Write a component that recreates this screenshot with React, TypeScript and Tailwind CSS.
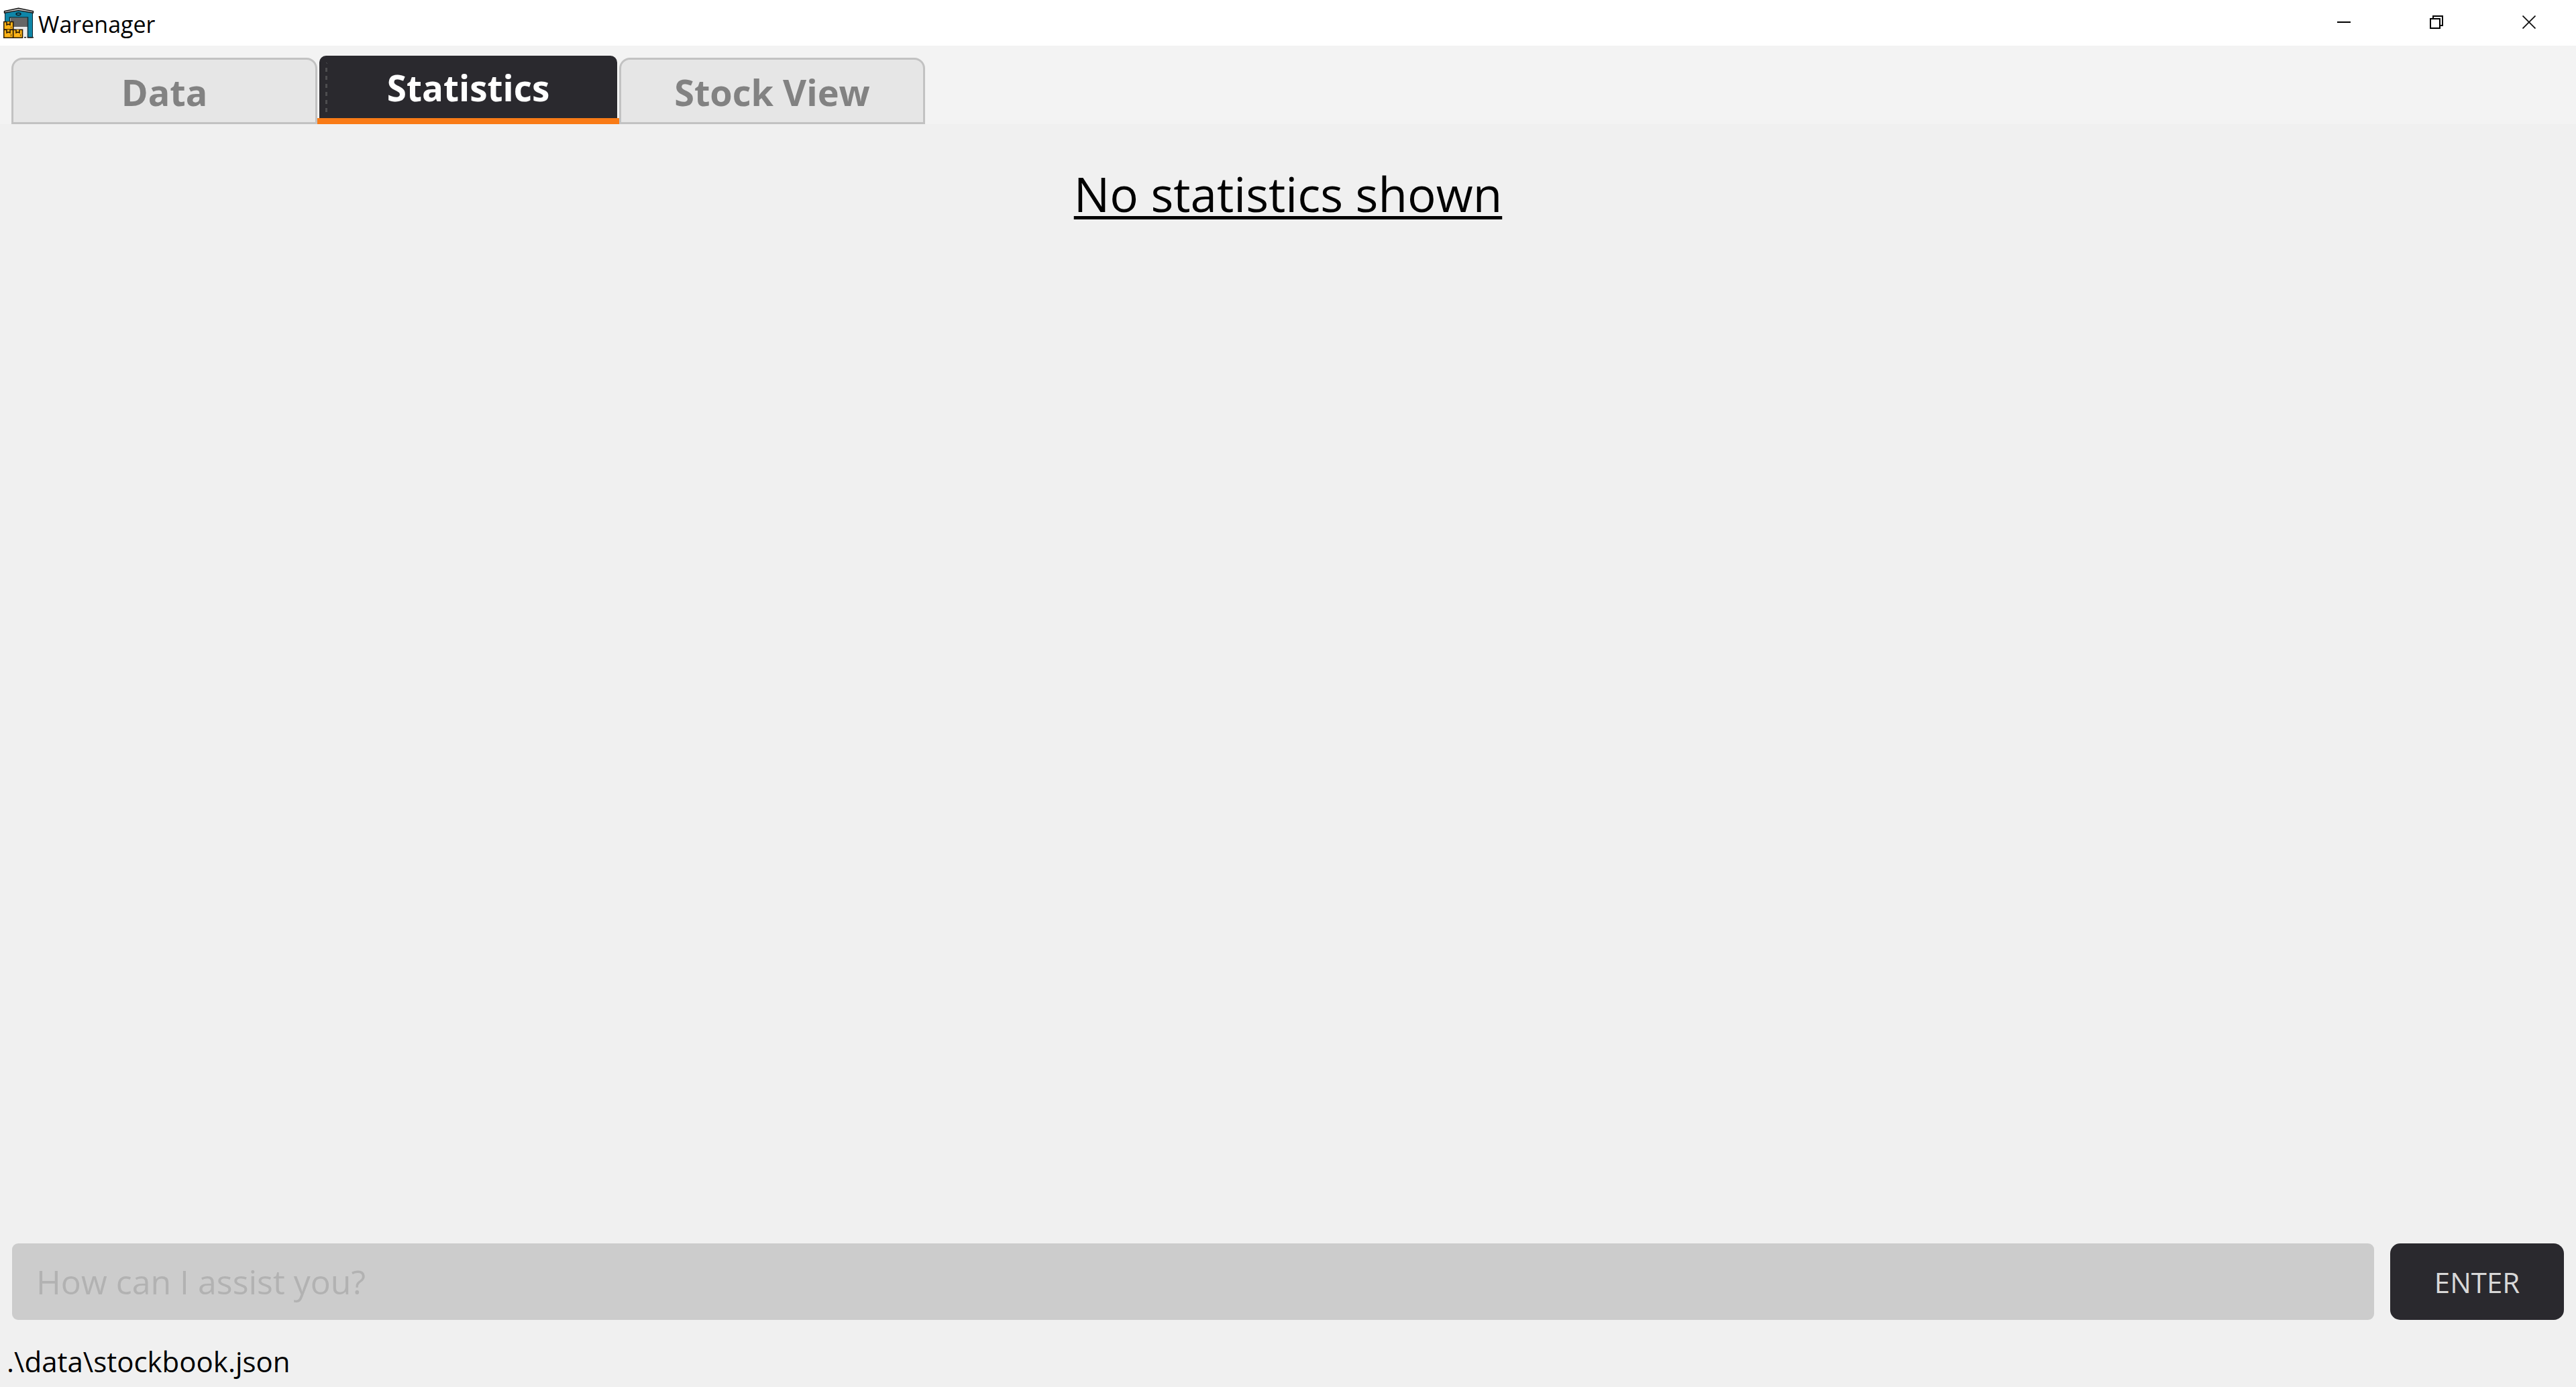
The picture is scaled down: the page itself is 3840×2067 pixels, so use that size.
import React, { useState } from "react";

function WarehouseIcon() {
  return (
    <svg className="size-[46px]" viewBox="0 0 46 46" aria-hidden="true">
      <path d="M2.5 8 L22 3 L43.5 8 V45 H36.5 V15 H9.5 V24 H2.5 Z" fill="#0f86a8" stroke="#12262e" strokeWidth="1" />
      <path d="M9.5 15 H36.5 V45 H15 V29 H9.5 Z" fill="#ececec" />
      <rect x="11" y="16" width="25" height="13" fill="#666666" />
      <path d="M9.5 22 V15 H36.5 V44" fill="none" stroke="#15323b" strokeWidth="1.6" />
      <path d="M1.5 8.3 V5.8 L22.5 1.2 L44.5 5.8 V8.3 L22.5 4.6 Z" fill="#c9c9c9" stroke="#161616" strokeWidth="1.4" strokeLinejoin="round" />
      <ellipse cx="22.5" cy="10" rx="3.4" ry="1.6" fill="#2ba3c4" stroke="#0c2129" strokeWidth="1.6" />
      <path d="M31 44.8 H34 M35.5 44.8 H45" stroke="#1c1c1c" strokeWidth="1.5" />
      <g fill="#fcb316" stroke="#2a1c05" strokeWidth="1.6">
        <rect x="0.7" y="21.5" width="14" height="11.8" />
        <rect x="0.7" y="33.3" width="14" height="12" />
        <rect x="14.7" y="33.3" width="13.8" height="12" />
        <path d="M5 21.5 V26 L7.6 25 L10 26 V21.5" />
        <path d="M5 33.3 V37.8 L7.6 36.8 L10 37.8 V33.3" />
        <path d="M19 33.3 V37.8 L21.6 36.8 L24 37.8 V33.3" />
      </g>
      <path d="M11.5 31 V28.5 M11.5 43 V40 M25.5 43 V40" stroke="#7a5206" strokeWidth="1.2" />
    </svg>
  );
}

function MinimizeIcon() {
  return (
    <svg className="size-5" viewBox="0 0 20 20" aria-hidden="true">
      <path d="M0 10 H20" stroke="#000" strokeWidth="2" />
    </svg>
  );
}

function RestoreIcon() {
  return (
    <svg className="size-5" viewBox="0 0 20 20" fill="none" stroke="#000" strokeWidth="2" aria-hidden="true">
      <rect x="1" y="5" width="14" height="14" />
      <path d="M5 5 V1 H19 V15 H15" />
    </svg>
  );
}

function CloseIcon() {
  return (
    <svg className="size-5" viewBox="0 0 20 20" fill="none" stroke="#111" strokeWidth="1.8" aria-hidden="true">
      <path d="M0.5 0.5 L19.5 19.5 M19.5 0.5 L0.5 19.5" />
    </svg>
  );
}

function TitleBar() {
  return (
    <header className="flex h-[68px] items-center justify-between bg-white">
      <div className="flex items-center gap-1.5 pl-[5px]">
        <WarehouseIcon />
        <span className="pt-1 text-[34px] leading-[44px]">Warenager</span>
      </div>
      <div className="flex h-[66px] self-start pr-px">
        <button aria-label="Minimize" className="flex w-[138px] items-center justify-center"><MinimizeIcon /></button>
        <button aria-label="Restore" className="flex w-[138px] items-center justify-center"><RestoreIcon /></button>
        <button aria-label="Close" className="flex w-[138px] items-center justify-center"><CloseIcon /></button>
      </div>
    </header>
  );
}

function Tab({ label, active, onSelect }: { label: string; active: boolean; onSelect: () => void }) {
  if (active) {
    return (
      <button role="tab" aria-selected="true" onClick={onSelect} className="flex h-[102px] w-[450px] flex-col items-center border-b-[9px] border-[#f97b16]">
        <span className="flex w-[444px] grow items-center rounded-t-[10px] bg-[#2a292e] text-[53px] leading-[72px] font-bold text-white">
          <svg className="ml-[9px] h-[76px] w-[3px]" viewBox="0 0 3 76" aria-hidden="true">
            <path d="M1.5 9 V76" stroke="#4d4d4f" strokeWidth="3" strokeDasharray="6 6" />
            <path d="M1 1 L3 3" stroke="#4d4d4f" />
          </svg>
          <span className="grow pt-0.5 pr-3 text-center">{label}</span>
        </span>
      </button>
    );
  }
  return (
    <button role="tab" aria-selected="false" onClick={onSelect} className="h-[99px] w-[456px] rounded-t-[16px] border-[3px] border-[#c2c2c2] bg-[#e6e6e6] pt-0.5 text-[54px] leading-[72px] font-bold text-[#828282]">
      {label}
    </button>
  );
}

const tabs = ["Data", "Statistics", "Stock View"];

export default function App() {
  const [active, setActive] = useState("Statistics");
  const [command, setCommand] = useState("");

  return (
    <div className="flex min-h-screen flex-col bg-[#f0f0f0] font-['Open_Sans','Noto_Sans',sans-serif] text-black">
      <TitleBar />
      <div role="tablist" className="flex items-end bg-[#f3f3f3] pt-[15px] pl-[17px]">
        {tabs.map((t) => (
          <Tab key={t} label={t} active={t === active} onSelect={() => setActive(t)} />
        ))}
      </div>
      <main role="tabpanel" className="grow pt-14 text-center">
        <h1 className="text-[71px] leading-[96px] underline decoration-[5px] underline-offset-[6px] [text-decoration-skip-ink:none]">No statistics shown</h1>
      </main>
      <form className="flex gap-6 px-[18px]" onSubmit={(e) => e.preventDefault()}>
        <input
          aria-label="Command"
          value={command}
          onChange={(e) => setCommand(e.target.value)}
          placeholder="How can I assist you?"
          className="h-[114px] min-w-0 grow rounded-[9px] bg-[#cccccc] px-9 text-[50px] text-[#333] placeholder:text-[#b2b2b2]"
        />
        <button type="submit" className="h-[114px] w-[259px] rounded-[15px] bg-[#2a292e] text-[42px] text-[#d8d8d8]">ENTER</button>
      </form>
      <footer className="pt-[34px] pb-2.5 pl-2.5 text-[42px] leading-[56px]">.\data\stockbook.json</footer>
    </div>
  );
}
